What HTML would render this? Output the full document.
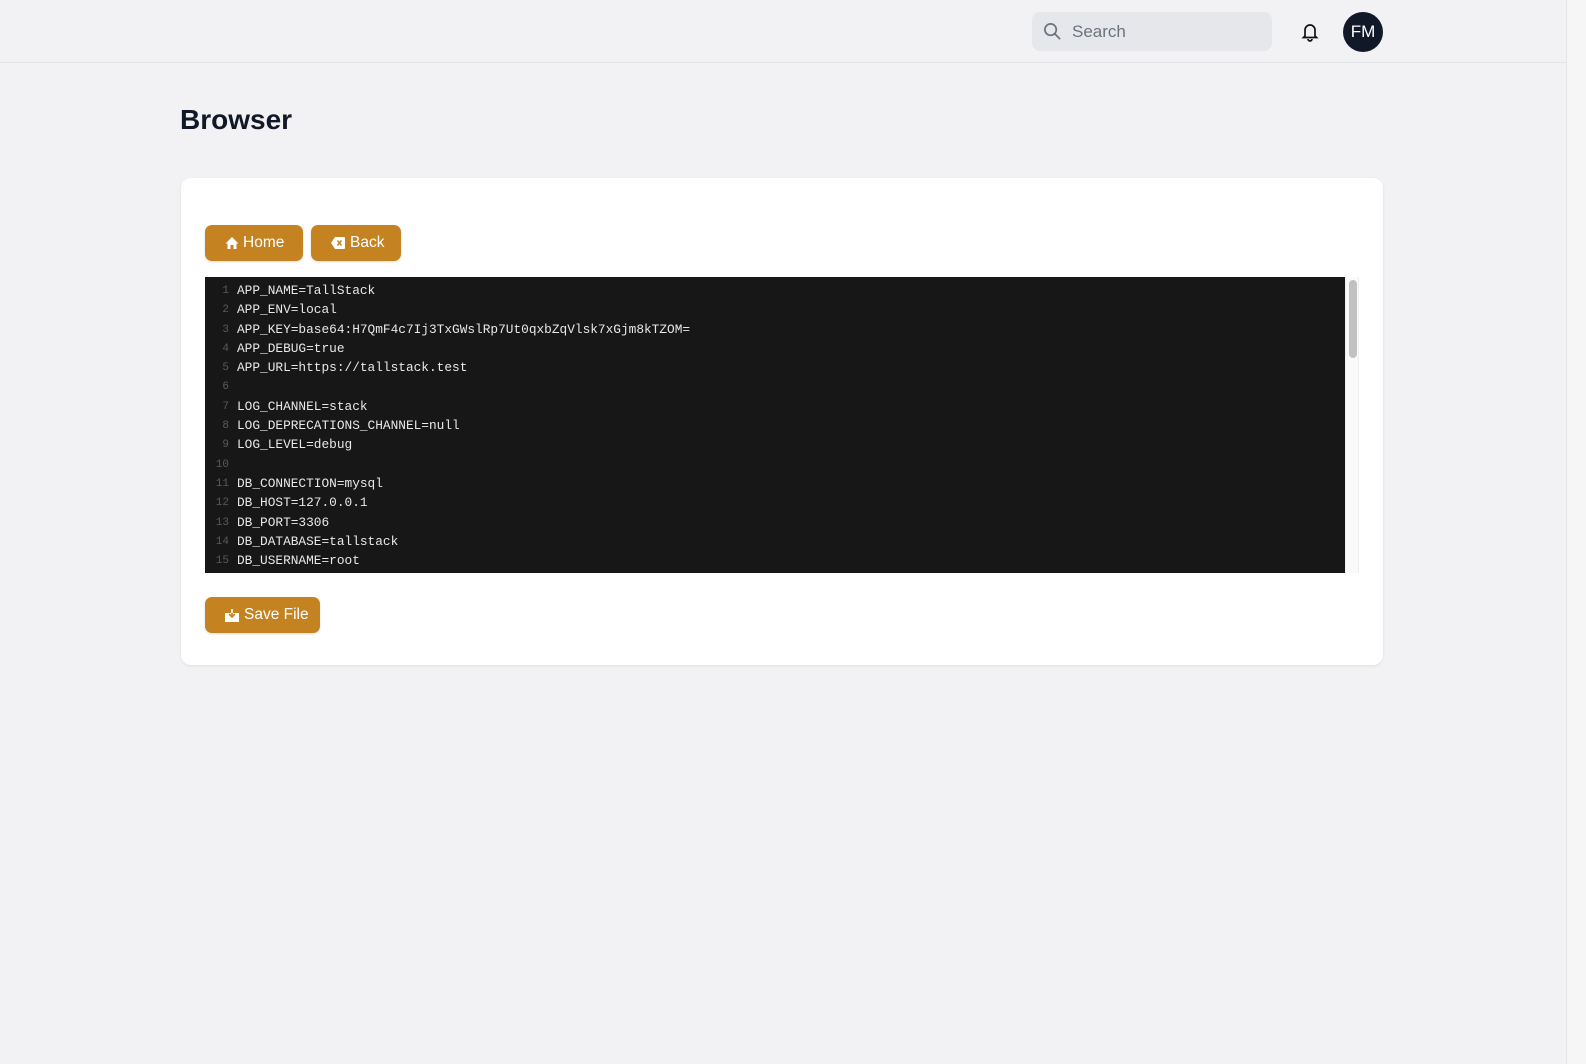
<!DOCTYPE html>
<html><head><meta charset="utf-8"><style>
*{box-sizing:border-box;margin:0;padding:0}
body{width:1586px;height:1064px;background:#f2f2f4;font-family:"Liberation Sans",sans-serif;position:relative;overflow:hidden}
.top{position:absolute;left:0;top:0;width:1566px;height:63px;border-bottom:1px solid #e2e3e6}
.rb{position:absolute;left:1566px;top:0;width:20px;height:1064px;background:#f6f6f7;border-left:1px solid #e4e4e6}
.search{position:absolute;left:1032px;top:12px;width:240px;height:39px;background:#e6e7ea;border-radius:8px}
.search span{position:absolute;left:40px;top:10px;font-size:17px;color:#6b7280}
.av{position:absolute;left:1343px;top:12px;width:40px;height:40px;border-radius:50%;background:#111827;color:#fff;font-size:17px;text-align:center;line-height:40px}
h1{position:absolute;left:180px;top:104px;font-size:28px;font-weight:bold;color:#111827}
.card{position:absolute;left:181px;top:178px;width:1202px;height:487px;background:#fff;border-radius:10px;box-shadow:0 1px 3px rgba(0,0,0,.08)}
.btn{position:absolute;height:36px;background:#c48320;border-radius:7px;color:#fff;font-size:15.5px;line-height:36px;box-shadow:0 1px 2px rgba(0,0,0,.15)}
.btn svg{position:absolute;top:11px}
.ed{position:absolute;left:24px;top:99px;width:1140px;height:296px;background:#171717;overflow:hidden;font-family:"Liberation Mono",monospace;font-size:12.8px;color:#e8e8e8}
.ln{height:19.3px;line-height:19.3px;white-space:pre;position:relative;padding-left:32px}
.ln i{font-style:normal;position:absolute;right:1116px;top:1px;color:#5a5a5a;font-size:11px}
.ed .in{padding-top:4px}
.sb{position:absolute;left:1164px;top:99px;width:14px;height:296px;background:#fafafa;border-left:1px solid #eee;border-right:1px solid #eee}
.sb div{position:absolute;left:3px;top:3px;width:8px;height:78px;background:#c1c1c1;border-radius:4px}
</style></head><body>
<div class="top"></div><div class="rb"></div>
<div class="search"><svg style="position:absolute;left:11px;top:10px" width="19" height="19" viewBox="0 0 20 20" fill="none" stroke="#6b7280" stroke-width="1.8"><circle cx="8" cy="8" r="6"/><path d="M12.5 12.5L18 18"/></svg><span>Search</span></div>
<svg style="position:absolute;left:1301px;top:22px" width="18" height="20" viewBox="0 0 18 20" fill="none" stroke="#111" stroke-width="1.7"><path d="M4 14V8a5 5 0 0 1 10 0v6l1.5 1.5h-13z"/><path d="M7 17a2 2 0 0 0 4 0"/></svg>
<div class="av">FM</div>
<h1>Browser</h1>
<div class="card">
<div class="btn" style="left:24px;top:47px;width:98px"><svg style="left:20px" width="14" height="14" viewBox="0 0 14 14"><path d="M7 1L0.5 7.5H2.5V13H5.5V9H8.5V13H11.5V7.5H13.5Z" fill="#fff"/></svg><span style="position:absolute;left:38px">Home</span></div>
<div class="btn" style="left:130px;top:47px;width:90px"><svg style="left:20px;top:12px" width="14" height="12" viewBox="0 0 14 12"><path d="M4 0H13a1 1 0 0 1 1 1V11a1 1 0 0 1-1 1H4L0 6Z" fill="#fff"/><path d="M6.5 3.5l4 5M10.5 3.5l-4 5" stroke="#c48320" stroke-width="1.5"/></svg><span style="position:absolute;left:39px">Back</span></div>
<div class="ed"><div class="in">
<div class="ln"><i>1</i>APP_NAME=TallStack</div>
<div class="ln"><i>2</i>APP_ENV=local</div>
<div class="ln"><i>3</i>APP_KEY=base64:H7QmF4c7Ij3TxGWslRp7Ut0qxbZqVlsk7xGjm8kTZOM=</div>
<div class="ln"><i>4</i>APP_DEBUG=true</div>
<div class="ln"><i>5</i>APP_URL=https://tallstack.test</div>
<div class="ln"><i>6</i></div>
<div class="ln"><i>7</i>LOG_CHANNEL=stack</div>
<div class="ln"><i>8</i>LOG_DEPRECATIONS_CHANNEL=null</div>
<div class="ln"><i>9</i>LOG_LEVEL=debug</div>
<div class="ln"><i>10</i></div>
<div class="ln"><i>11</i>DB_CONNECTION=mysql</div>
<div class="ln"><i>12</i>DB_HOST=127.0.0.1</div>
<div class="ln"><i>13</i>DB_PORT=3306</div>
<div class="ln"><i>14</i>DB_DATABASE=tallstack</div>
<div class="ln"><i>15</i>DB_USERNAME=root</div>
<div class="ln"><i>16</i>DB_PASSWORD=</div>
</div></div>
<div class="sb"><div></div></div>
<div class="btn" style="left:24px;top:419px;width:115px"><svg style="left:20px" width="14" height="14" viewBox="0 0 14 14"><path d="M0 5h14v9H0z" fill="#fff"/><path d="M7 1V9M4 6L7 9L10 6" stroke="#c48320" stroke-width="1.6" fill="none"/><path d="M7 1V5" stroke="#fff" stroke-width="1.6"/></svg><span style="position:absolute;left:39px">Save File</span></div>
</div>
</body></html>
